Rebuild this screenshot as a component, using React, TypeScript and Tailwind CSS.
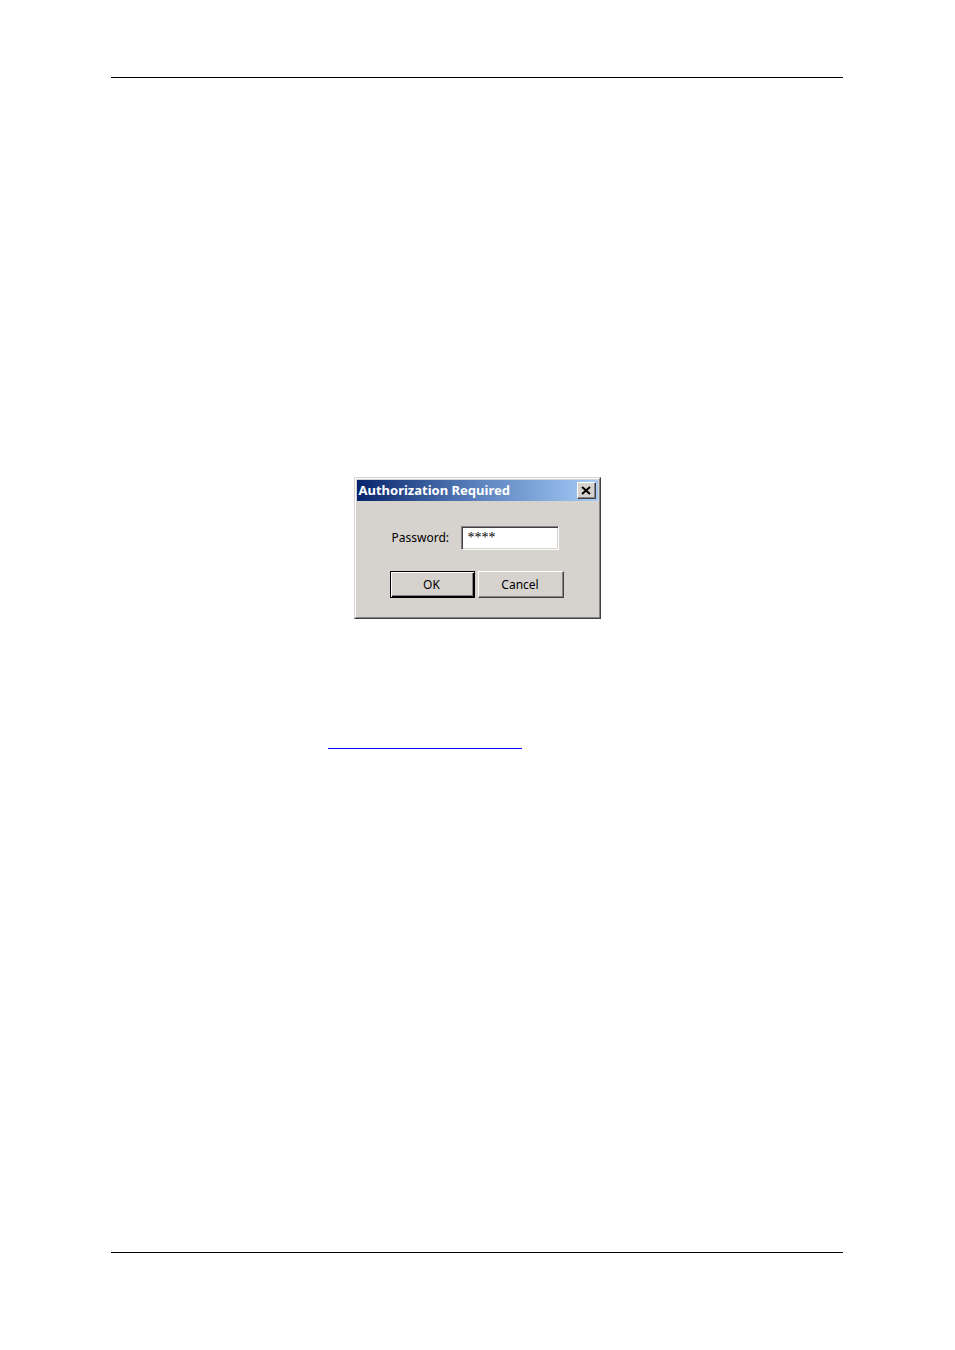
import { useState } from 'react';

function AuthorizationDialog() {
  const [password, setPassword] = useState('****');

  return (
    <form
      role="dialog"
      aria-labelledby="dialog-title"
      onSubmit={(e) => e.preventDefault()}
      className="mx-auto w-[247px] border border-t-[#d6d3ce] border-r-[#423f42] border-b-[#423f42] border-l-[#d6d3ce] bg-[#d6d3ce] font-['Noto_Sans',sans-serif] text-xs text-black"
    >
      <div className="border border-t-white border-r-[#848284] border-b-[#848284] border-l-white p-px pb-[19px]">
        {/* Title bar */}
        <div className="flex h-[21px] items-center justify-between bg-linear-to-r/srgb from-[#08246b] via-[#5a82bd] to-[#a5cbf7] pr-[2px] pl-[2px]">
          <h1 id="dialog-title" className="text-[13px] font-bold text-white">
            Authorization Required
          </h1>
          <button
            type="button"
            aria-label="Close"
            className="flex h-[17px] w-[19px] items-center justify-center border border-t-white border-r-[#423f42] border-b-[#423f42] border-l-white bg-[#d6d3ce] shadow-[inset_-1px_-1px_0_#848284]"
          >
            <svg viewBox="0 0 10 9" className="h-[9px] w-[10px]" fill="none" stroke="#000" strokeWidth="2">
              <path d="M1 1L9 8M9 1L1 8" />
            </svg>
          </button>
        </div>

        {/* Password field */}
        <div className="mt-[25px] flex items-center justify-between pr-[39px] pl-[35px]">
          <label htmlFor="password">Password:</label>
          <input
            id="password"
            type="text"
            autoComplete="off"
            value={password}
            onChange={(e) => setPassword(e.target.value)}
            className="h-6 w-[98px] border border-t-[#848284] border-r-white border-b-white border-l-[#848284] bg-white px-[6px] font-['Liberation_Serif',serif] text-sm leading-5 shadow-[inset_1px_1px_0_#423f42,inset_-1px_-1px_0_#d6d3ce] outline-none"
          />
        </div>

        {/* Actions */}
        <div className="mt-[21px] flex justify-center gap-[3px]">
          <button
            type="submit"
            className="h-[27px] w-[85px] border border-black pr-[2px] shadow-[inset_1px_1px_0_#fff,inset_-1px_-1px_0_#000,inset_-2px_-2px_0_#848284]"
          >
            OK
          </button>
          <button
            type="button"
            className="h-[27px] w-[86px] border border-t-white border-r-[#423f42] border-b-[#423f42] border-l-white pr-[2px] shadow-[inset_-1px_-1px_0_#848284]"
          >
            Cancel
          </button>
        </div>
      </div>
    </form>
  );
}

export default function App() {
  return (
    <div className="flex min-h-screen flex-col bg-white pt-[77px] pr-[112px] pb-[97px] pl-[111px]">
      <hr className="border-black" />
      <main className="flex-1 pt-[399px]">
        <AuthorizationDialog />
        <a
          href="#"
          aria-label="Link"
          className="mt-[129px] ml-[217px] block h-px w-[194px] bg-[#0000ff]"
        />
      </main>
      <hr className="border-black" />
    </div>
  );
}
